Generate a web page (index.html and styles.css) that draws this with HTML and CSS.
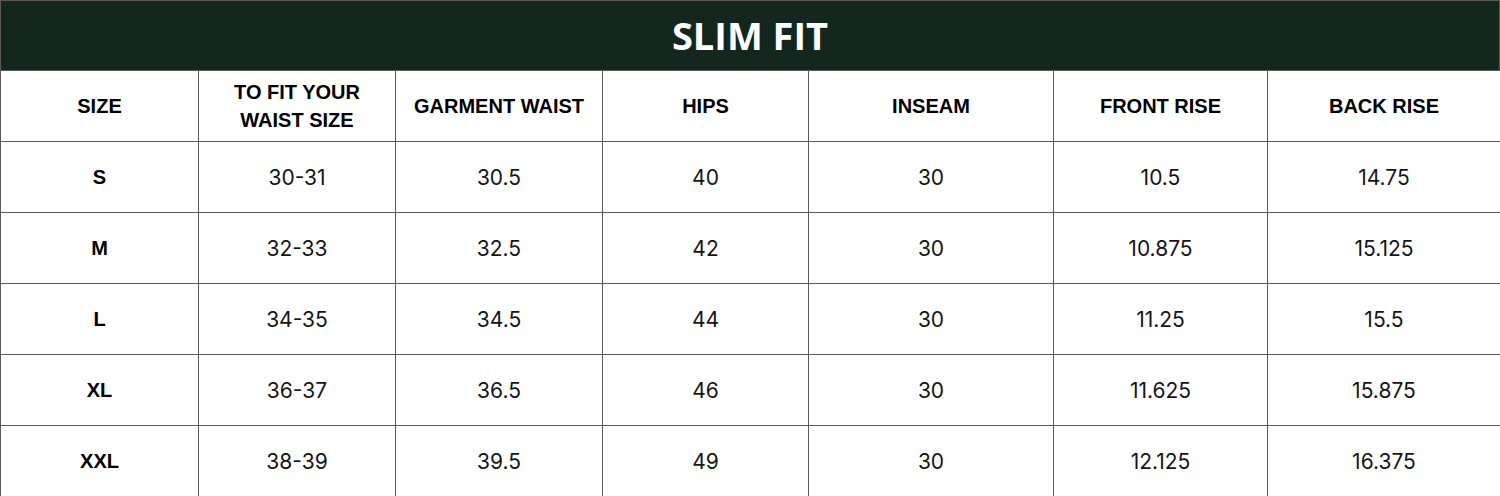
FILE: index.html
```html
<!DOCTYPE html>
<html lang="en">
<head>
<meta charset="utf-8">
<title>Slim Fit Size Chart</title>
<link rel="stylesheet" href="styles.css">
</head>
<body>
<div class="chart">
  <div class="title">SLIM FIT</div>
  <div class="grid">
    <div class="cell head">SIZE</div>
    <div class="cell head">TO FIT YOUR<br>WAIST SIZE</div>
    <div class="cell head">GARMENT WAIST</div>
    <div class="cell head">HIPS</div>
    <div class="cell head">INSEAM</div>
    <div class="cell head">FRONT RISE</div>
    <div class="cell head">BACK RISE</div>

    <div class="cell size">S</div>
    <div class="cell">30-31</div>
    <div class="cell">30.5</div>
    <div class="cell">40</div>
    <div class="cell">30</div>
    <div class="cell">10.5</div>
    <div class="cell">14.75</div>

    <div class="cell size">M</div>
    <div class="cell">32-33</div>
    <div class="cell">32.5</div>
    <div class="cell">42</div>
    <div class="cell">30</div>
    <div class="cell">10.875</div>
    <div class="cell">15.125</div>

    <div class="cell size">L</div>
    <div class="cell">34-35</div>
    <div class="cell">34.5</div>
    <div class="cell">44</div>
    <div class="cell">30</div>
    <div class="cell">11.25</div>
    <div class="cell">15.5</div>

    <div class="cell size">XL</div>
    <div class="cell">36-37</div>
    <div class="cell">36.5</div>
    <div class="cell">46</div>
    <div class="cell">30</div>
    <div class="cell">11.625</div>
    <div class="cell">15.875</div>

    <div class="cell size">XXL</div>
    <div class="cell">38-39</div>
    <div class="cell">39.5</div>
    <div class="cell">49</div>
    <div class="cell">30</div>
    <div class="cell">12.125</div>
    <div class="cell">16.375</div>
  </div>
</div>
</body>
</html>
```

FILE: styles.css
```css
html, body {
  margin: 0;
  padding: 0;
  background: #ffffff;
  overflow: hidden;
}

.chart {
  width: 1500px;
  font-family: "Open Sans", "Liberation Sans", sans-serif;
  color: #000;
}

.title {
  box-sizing: border-box;
  height: 70px;
  background: #13271e;
  border-top: 1px solid #5a5a5a;
  border-left: 1px solid #5a5a5a;
  border-right: 1px solid #5a5a5a;
  color: #ffffff;
  font-family: "Open Sans", "Liberation Sans", sans-serif;
  font-weight: 700;
  font-size: 38px;
  display: flex;
  align-items: center;
  justify-content: center;
  padding-bottom: 1px;
}

.grid {
  display: grid;
  grid-template-columns: 198px 197px 207px 206px 245px 214px 233px;
  grid-auto-rows: 71px;
  border-top: 1px solid #5a5a5a;
  border-left: 1px solid #5a5a5a;
  box-sizing: border-box;
}

.cell {
  box-sizing: border-box;
  border-right: 1px solid #5a5a5a;
  border-bottom: 1px solid #5a5a5a;
  display: flex;
  align-items: center;
  justify-content: center;
  text-align: center;
  font-family: "Inter", "Open Sans", sans-serif;
  font-size: 21px;
  color: #151515;
}

.cell.head,
.cell.size {
  font-family: "Liberation Sans", Arial, sans-serif;
  font-weight: 700;
  font-size: 20px;
  line-height: 28px;
  color: #000;
}
```
